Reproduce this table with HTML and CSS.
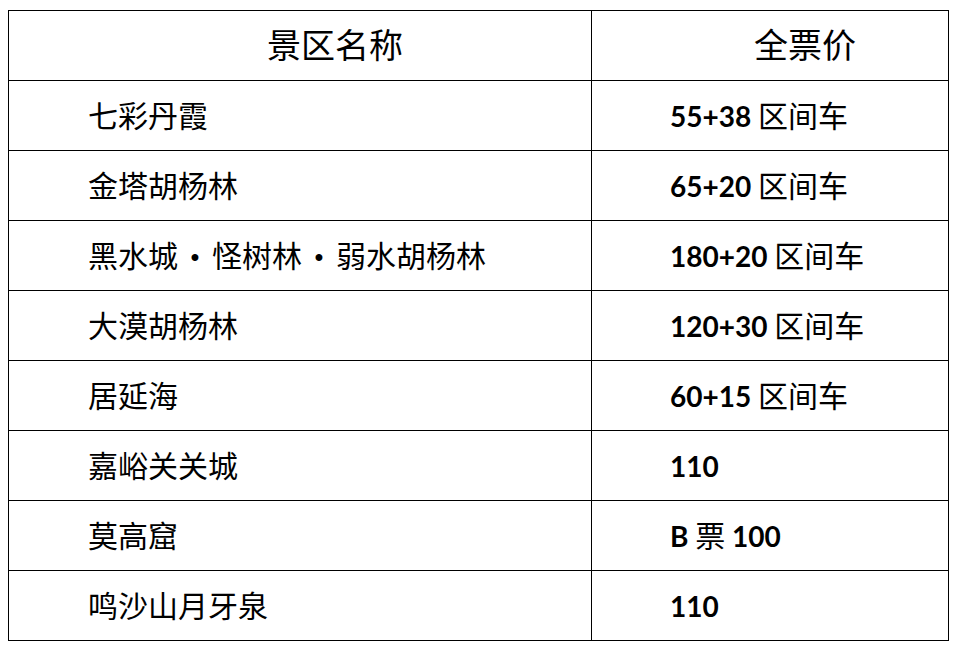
FILE: index.html
```html
<!DOCTYPE html>
<html lang="zh">
<head>
<meta charset="utf-8">
<link rel="stylesheet" href="styles.css">
</head>
<body>
<table class="prices">
  <colgroup><col class="col-name"><col class="col-price"></colgroup>
  <thead>
    <tr><th class="name-h">景区名称</th><th class="price-h">全票价</th></tr>
  </thead>
  <tbody>
    <tr><td class="name">七彩丹霞</td><td class="price"><span class="num">55+38</span> 区间车</td></tr>
    <tr><td class="name">金塔胡杨林</td><td class="price"><span class="num">65+20</span> 区间车</td></tr>
    <tr><td class="name">黑水城<span class="dot">•</span>怪树林<span class="dot">•</span>弱水胡杨林</td><td class="price"><span class="num">180+20</span> 区间车</td></tr>
    <tr><td class="name">大漠胡杨林</td><td class="price"><span class="num">120+30</span> 区间车</td></tr>
    <tr><td class="name">居延海</td><td class="price"><span class="num">60+15</span> 区间车</td></tr>
    <tr><td class="name">嘉峪关关城</td><td class="price"><span class="num">110</span></td></tr>
    <tr><td class="name">莫高窟</td><td class="price"><span class="num">B</span> 票 <span class="num">100</span></td></tr>
    <tr><td class="name">鸣沙山月牙泉</td><td class="price"><span class="num">110</span></td></tr>
  </tbody>
</table>
</body>
</html>
```

FILE: styles.css
```css
html, body {
  margin: 0;
  padding: 0;
  background: #ffffff;
}
body {
  padding: 10px 0 0 8px;
  font-family: "Noto Sans CJK SC", "Noto Sans", sans-serif;
  color: #000;
}
.prices {
  border-collapse: collapse;
  table-layout: fixed;
  width: 940px;
}
.col-name {
  width: 583px;
}
.col-price {
  width: 357px;
}
.prices th, .prices td {
  border: 1px solid #000;
  height: 69px;
  padding: 0 0 3px 0;
  box-sizing: border-box;
  vertical-align: middle;
  white-space: nowrap;
  overflow: hidden;
}
.prices th {
  font-weight: 400;
  font-size: 34px;
  text-align: left;
  line-height: 1;
  height: 70px;
}
.prices td {
  font-size: 30px;
  line-height: 1;
  height: 70px;
}
.name-h {
  padding-left: 258px !important;
}
.price-h {
  padding-left: 162px !important;
}
.name {
  padding-left: 79px !important;
}
.price {
  padding-left: 78px !important;
}
.dot {
  font-family: "Liberation Sans", sans-serif;
  font-weight: 700;
  font-size: 24px;
  display: inline-block;
  width: 34px;
  text-align: center;
  vertical-align: 2px;
}
.num {
  font-family: "Lato", "Open Sans", sans-serif;
  font-weight: 700;
  font-size: 28px;
}
```
